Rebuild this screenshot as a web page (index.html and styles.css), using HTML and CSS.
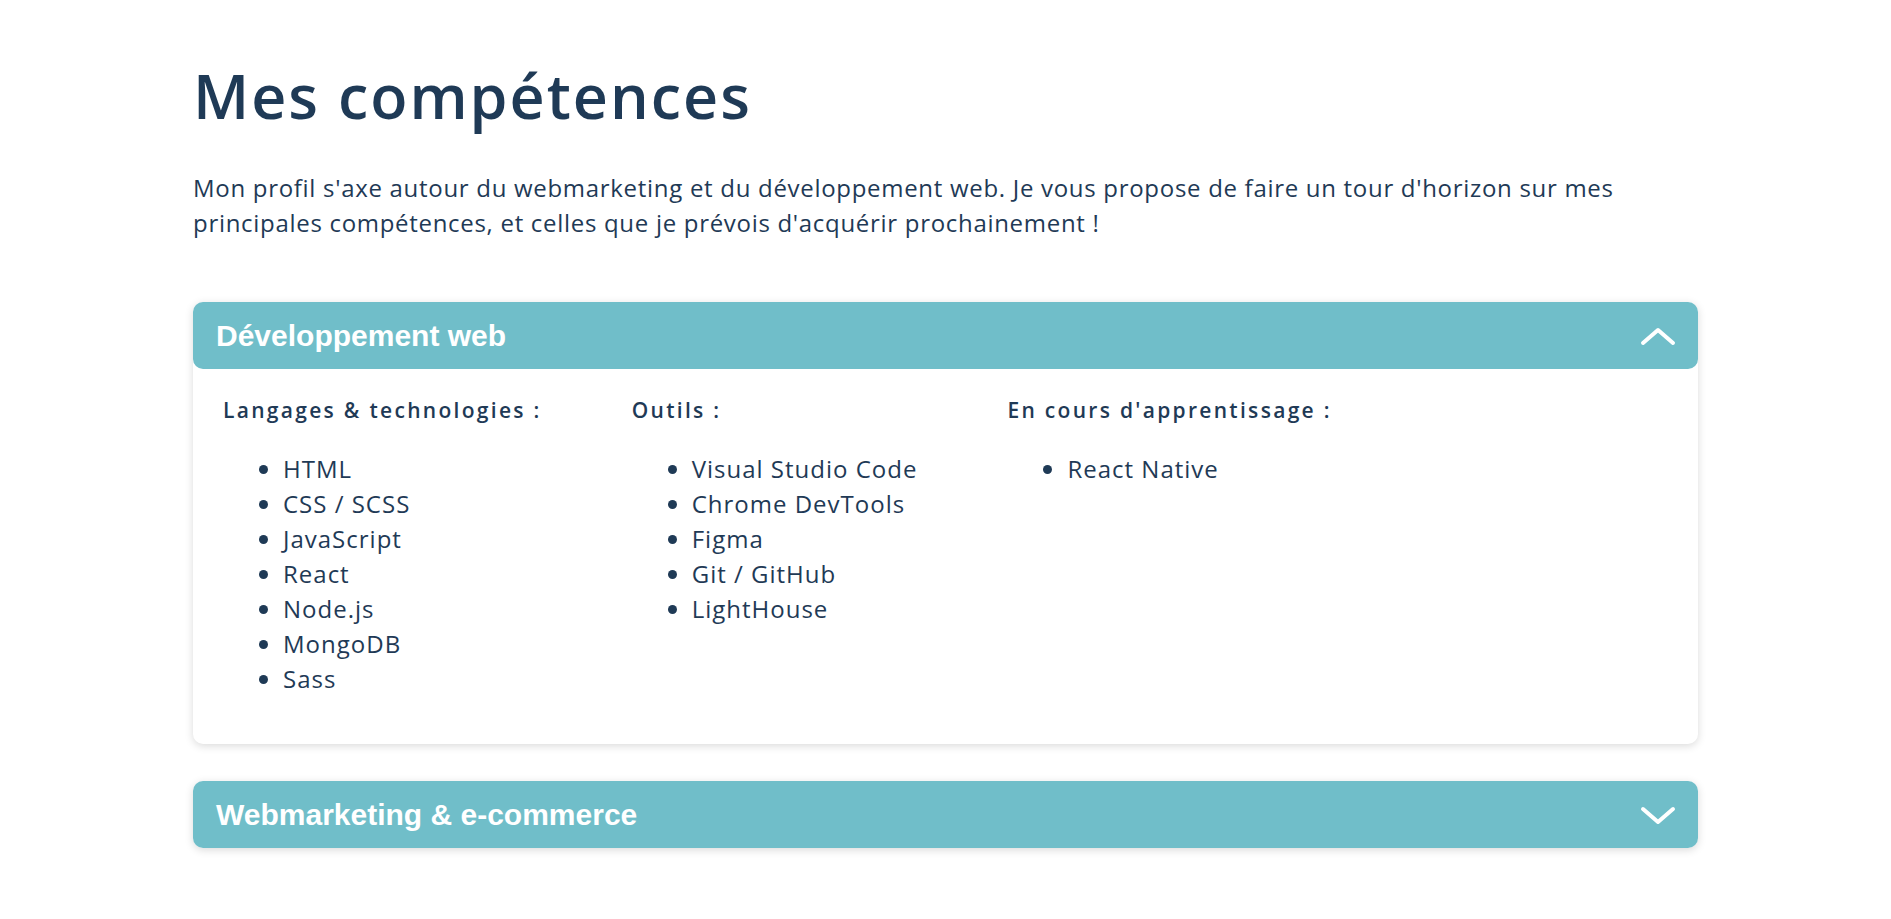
FILE: index.html
```html
<!DOCTYPE html>
<html lang="fr">
<head>
<meta charset="utf-8">
<title>Mes compétences</title>
<link rel="stylesheet" href="styles.css">
</head>
<body>
<main class="skills">
  <h1 class="skills-title">Mes compétences</h1>
  <p class="skills-intro">Mon profil s'axe autour du webmarketing et du développement web. Je vous propose de faire un tour d'horizon sur mes principales compétences, et celles que je prévois d'acquérir prochainement !</p>

  <section class="panel open">
    <header class="panel-head">
      <h2 class="panel-title">Développement web</h2>
      <svg class="chevron" width="36" height="20" viewBox="0 0 36 20"><polyline points="3,17 18,4 33,17" fill="none" stroke="#fff" stroke-width="4" stroke-linecap="round" stroke-linejoin="round"/></svg>
    </header>
    <div class="panel-body">
      <div class="col">
        <h3 class="col-title">Langages &amp; technologies :</h3>
        <ul class="col-list">
          <li>HTML</li>
          <li>CSS / SCSS</li>
          <li>JavaScript</li>
          <li>React</li>
          <li>Node.js</li>
          <li>MongoDB</li>
          <li>Sass</li>
        </ul>
      </div>
      <div class="col">
        <h3 class="col-title">Outils :</h3>
        <ul class="col-list">
          <li>Visual Studio Code</li>
          <li>Chrome DevTools</li>
          <li>Figma</li>
          <li>Git / GitHub</li>
          <li>LightHouse</li>
        </ul>
      </div>
      <div class="col">
        <h3 class="col-title">En cours d'apprentissage :</h3>
        <ul class="col-list">
          <li>React Native</li>
        </ul>
      </div>
    </div>
  </section>

  <section class="panel">
    <header class="panel-head">
      <h2 class="panel-title">Webmarketing &amp; e-commerce</h2>
      <svg class="chevron" width="36" height="20" viewBox="0 0 36 20"><polyline points="3,4 18,17 33,4" fill="none" stroke="#fff" stroke-width="4" stroke-linecap="round" stroke-linejoin="round"/></svg>
    </header>
  </section>
</main>
</body>
</html>
```

FILE: styles.css
```css
html, body {
  margin: 0;
  padding: 0;
  background: #ffffff;
}

body {
  font-family: "Open Sans", "Noto Sans", sans-serif;
  color: #1f3a56;
}

.skills {
  width: 1505px;
  margin: 0 auto;
  padding-top: 60px;
  padding-bottom: 60px;
}

.skills-title {
  margin: 0;
  font-size: 61px;
  line-height: 72px;
  font-weight: 600;
  letter-spacing: 2px;
}

.skills-intro {
  margin: 38px 0 0;
  font-size: 24px;
  line-height: 35px;
  font-weight: 400;
  letter-spacing: 0.7px;
}

.panel {
  margin-top: 62px;
  border-radius: 10px;
  background: #ffffff;
  box-shadow: 0 2px 9px rgba(0, 0, 0, 0.15);
}

.panel + .panel {
  margin-top: 37px;
}

.panel-head {
  height: 67px;
  display: flex;
  align-items: center;
  justify-content: space-between;
  padding: 0 22px 0 23px;
  background: #70bec9;
  border-radius: 10px;
}

.panel-title {
  margin: 0;
  font-family: "Liberation Sans", Arial, sans-serif;
  font-weight: 700;
  font-size: 30px;
  color: #ffffff;
}

.chevron {
  display: block;
}

.panel-body {
  display: flex;
  gap: 90px;
  padding: 26px 30px 48px;
}

.col-title {
  margin: 0;
  font-size: 21px;
  line-height: 30px;
  font-weight: 600;
  letter-spacing: 2.3px;
}

.col-list {
  margin: 26px 0 0;
  padding-left: 60px;
  font-size: 24px;
  line-height: 35px;
  letter-spacing: 1px;
}
```
